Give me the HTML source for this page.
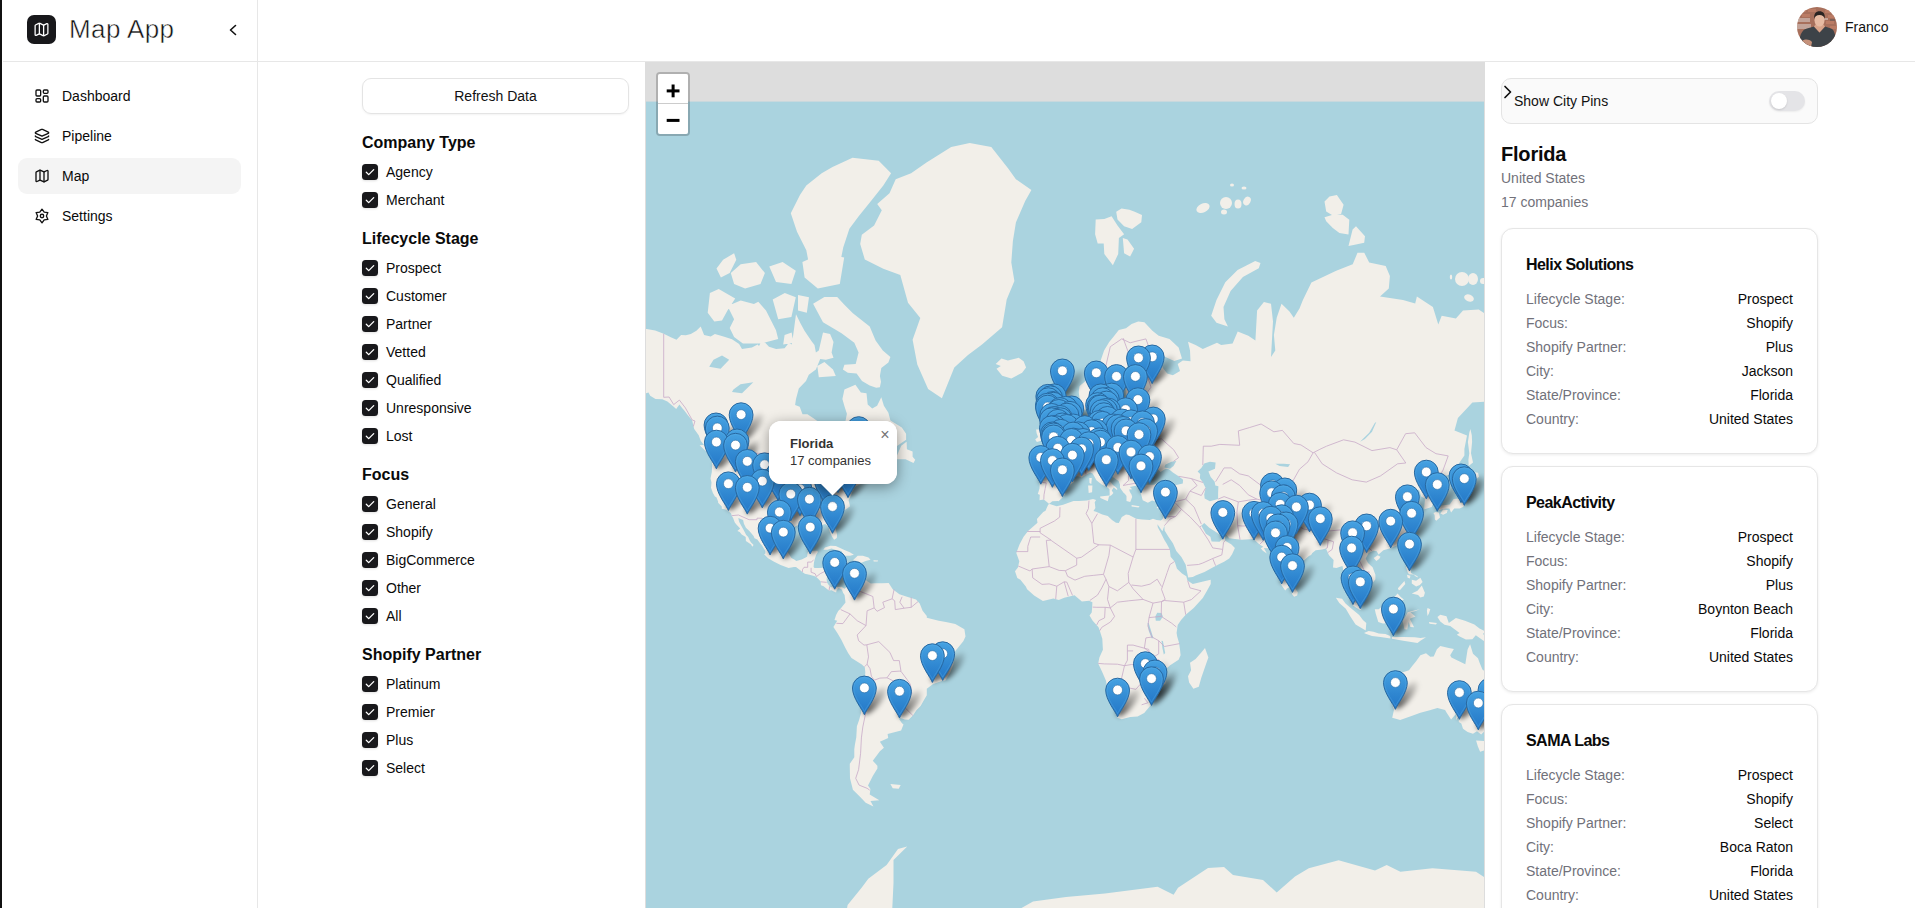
<!DOCTYPE html><html><head><meta charset="utf-8"><style>

*{box-sizing:border-box;margin:0;padding:0}
html,body{width:1915px;height:908px;overflow:hidden;background:#fff;font-family:"Liberation Sans", sans-serif;color:#0a0a0a}
.abs{position:absolute}
.lbar{position:absolute;left:0;top:0;width:2px;height:908px;background:#111}
.side{position:absolute;left:2px;top:0;width:256px;height:908px;border-right:1px solid #e7e7e7}
.hline{position:absolute;left:3px;top:61px;width:1912px;height:1px;background:#e7e7e7}
.nav{position:absolute;left:18px;width:223px;height:36px;border-radius:9px;font-size:14px;line-height:36px}
.nav svg{position:absolute;left:16px;top:10px}
.nav span{position:absolute;left:44px;top:0}
.nav.act{background:#f4f4f4}
.h{position:absolute;left:362px;font-size:16px;font-weight:bold;line-height:20px;white-space:nowrap}
.cb{position:absolute;left:362px;height:20px;font-size:14px;line-height:20px;white-space:nowrap}
.cb svg{position:absolute;left:0;top:2px;filter:drop-shadow(0 1px 1px rgba(0,0,0,.12))}
.cb span{position:absolute;left:24px;top:0}
.card{position:absolute;left:1501px;width:317px;height:226px;border:1px solid #e6e6e6;border-radius:12px;background:#fff;box-shadow:0 1px 3px rgba(0,0,0,.08)}
.card .t{position:absolute;left:24px;top:26px;font-size:16px;font-weight:bold;letter-spacing:-0.55px;line-height:20px;white-space:nowrap}
.row{position:absolute;left:24px;width:267px;font-size:14px;line-height:20px;white-space:nowrap}
.row .k{position:absolute;left:0;color:#71717a}
.row .v{position:absolute;right:0;color:#0a0a0a}

</style></head><body>
<div class="lbar"></div><div class="side"></div><div class="hline"></div>
<div class="abs" style="left:27px;top:15px;width:29px;height:29px;border-radius:7px;background:#18181b"></div>
<div class="abs" style="left:33px;top:21px;width:17px;height:17px"><svg width="17" height="17" viewBox="0 0 24 24" fill="none" stroke="#fff" stroke-width="1.8" stroke-linecap="round" stroke-linejoin="round"><path d="M14.106 5.553a2 2 0 0 0 1.788 0l3.659-1.83A1 1 0 0 1 21 4.619v12.764a1 1 0 0 1-.553.894l-4.553 2.277a2 2 0 0 1-1.788 0l-4.212-2.106a2 2 0 0 0-1.788 0l-3.659 1.83A1 1 0 0 1 3 19.381V6.618a1 1 0 0 1 .553-.894l4.553-2.277a2 2 0 0 1 1.788 0z"/><path d="M15 5.764v15"/><path d="M9 3.236v15"/></svg></div>
<div class="abs" style="left:69px;top:13px;font-size:26px;line-height:32px;white-space:nowrap;color:#111;letter-spacing:0.4px;-webkit-text-stroke:0.5px #fff">Map App</div>
<svg class="abs" style="left:226px;top:22px" width="14" height="16" viewBox="0 0 14 16"><path d="M9.5 3.5L4.5 8l5 4.5" fill="none" stroke="#111" stroke-width="1.6" stroke-linecap="round" stroke-linejoin="round"/></svg>
<div class="nav" style="top:78px"><svg width="16" height="16" viewBox="0 0 24 24" fill="none" stroke="#111" stroke-width="2" stroke-linecap="round" stroke-linejoin="round"><rect x="3" y="3" width="7" height="9" rx="1.5"/><rect x="14" y="3" width="7" height="5" rx="1.5"/><rect x="14" y="12" width="7" height="9" rx="1.5"/><rect x="3" y="16" width="7" height="5" rx="1.5"/></svg><span>Dashboard</span></div>
<div class="nav" style="top:118px"><svg width="16" height="16" viewBox="0 0 24 24" fill="none" stroke="#111" stroke-width="2" stroke-linecap="round" stroke-linejoin="round"><path d="M12.83 2.18a2 2 0 0 0-1.66 0L2.6 6.08a1 1 0 0 0 0 1.83l8.58 3.91a2 2 0 0 0 1.66 0l8.58-3.9a1 1 0 0 0 0-1.83z"/><path d="M2 12a1 1 0 0 0 .58.91l8.6 3.91a2 2 0 0 0 1.65 0l8.58-3.9A1 1 0 0 0 22 12"/><path d="M2 17a1 1 0 0 0 .58.91l8.6 3.91a2 2 0 0 0 1.65 0l8.58-3.9A1 1 0 0 0 22 17"/></svg><span>Pipeline</span></div>
<div class="nav act" style="top:158px"><svg width="16" height="16" viewBox="0 0 24 24" fill="none" stroke="#111" stroke-width="2" stroke-linecap="round" stroke-linejoin="round"><path d="M14.106 5.553a2 2 0 0 0 1.788 0l3.659-1.83A1 1 0 0 1 21 4.619v12.764a1 1 0 0 1-.553.894l-4.553 2.277a2 2 0 0 1-1.788 0l-4.212-2.106a2 2 0 0 0-1.788 0l-3.659 1.83A1 1 0 0 1 3 19.381V6.618a1 1 0 0 1 .553-.894l4.553-2.277a2 2 0 0 1 1.788 0z"/><path d="M15 5.764v15"/><path d="M9 3.236v15"/></svg><span>Map</span></div>
<div class="nav" style="top:198px"><svg width="16" height="16" viewBox="0 0 24 24" fill="none" stroke="#111" stroke-width="2" stroke-linecap="round" stroke-linejoin="round"><path d="M12.00,1.80L15.30,6.28L20.83,6.90L18.60,12.00L20.83,17.10L15.30,17.72L12.00,22.20L8.70,17.72L3.17,17.10L5.40,12.00L3.17,6.90L8.70,6.28Z"/><circle cx="12" cy="12" r="2.6"/></svg><span>Settings</span></div>
<svg class="abs" style="left:1797px;top:7px" width="40" height="40" viewBox="0 0 40 40"><defs><clipPath id="av"><circle cx="20" cy="20" r="20"/></clipPath></defs><g clip-path="url(#av)">
<rect width="40" height="40" fill="#a8705c"/>
<g fill="#c08068" opacity=".8"><rect x="0" y="2" width="9" height="3"/><rect x="11" y="2" width="8" height="3"/><rect x="28" y="3" width="9" height="3"/><rect x="31" y="8" width="9" height="3"/><rect x="29" y="14" width="8" height="3"/><rect x="33" y="19" width="7" height="3"/><rect x="5" y="7" width="8" height="3"/></g>
<g fill="#d9d0cc" opacity=".55"><rect x="1" y="11" width="12" height="4"/><rect x="0" y="17" width="14" height="5"/><rect x="27" y="11" width="4" height="2"/></g>
<rect x="33" y="12" width="5" height="2" fill="#6e5a55" opacity=".7"/>
<path d="M2 40C2 30 4 23 10 21.5L17 19.5L22.5 25.5L28 19.5L34 21.5C38 23 39 30 39 40Z" fill="#3d4348"/>
<path d="M17 19.5L22.5 25.5L28 19.5L26 17H19Z" fill="#d9a48a"/>
<ellipse cx="22.5" cy="13.2" rx="5" ry="6.3" fill="#e7bba3"/>
<path d="M17.2 12C16.8 6.5 19 4.3 22.5 4.3S28.3 6.5 27.8 12C27 9 25.5 8 22.5 8S18 9 17.2 12Z" fill="#2a2422"/>
<path d="M5 34C8 32 12 32 15 35L14 40H4Z" fill="#d49a80" opacity=".9"/>
</g></svg>
<div class="abs" style="left:1845px;top:17px;font-size:14px;line-height:20px;color:#111">Franco</div>
<div class="abs" style="left:362px;top:78px;width:267px;height:36px;border:1px solid #e4e4e4;border-radius:9px;box-shadow:0 1px 2px rgba(0,0,0,.05);text-align:center;font-size:14px;line-height:34px;color:#111">Refresh Data</div>
<div class="h" style="top:133px">Company Type</div>
<div class="cb" style="top:162px"><svg width="16" height="16" viewBox="0 0 16 16"><rect x="0" y="0" width="16" height="16" rx="3.5" fill="#18181b"/><path d="M4.3 8.3l2.4 2.3 5-5" fill="none" stroke="#fff" stroke-width="1.3" stroke-linecap="round" stroke-linejoin="round"/></svg><span>Agency</span></div>
<div class="cb" style="top:190px"><svg width="16" height="16" viewBox="0 0 16 16"><rect x="0" y="0" width="16" height="16" rx="3.5" fill="#18181b"/><path d="M4.3 8.3l2.4 2.3 5-5" fill="none" stroke="#fff" stroke-width="1.3" stroke-linecap="round" stroke-linejoin="round"/></svg><span>Merchant</span></div>
<div class="h" style="top:229px">Lifecycle Stage</div>
<div class="cb" style="top:258px"><svg width="16" height="16" viewBox="0 0 16 16"><rect x="0" y="0" width="16" height="16" rx="3.5" fill="#18181b"/><path d="M4.3 8.3l2.4 2.3 5-5" fill="none" stroke="#fff" stroke-width="1.3" stroke-linecap="round" stroke-linejoin="round"/></svg><span>Prospect</span></div>
<div class="cb" style="top:286px"><svg width="16" height="16" viewBox="0 0 16 16"><rect x="0" y="0" width="16" height="16" rx="3.5" fill="#18181b"/><path d="M4.3 8.3l2.4 2.3 5-5" fill="none" stroke="#fff" stroke-width="1.3" stroke-linecap="round" stroke-linejoin="round"/></svg><span>Customer</span></div>
<div class="cb" style="top:314px"><svg width="16" height="16" viewBox="0 0 16 16"><rect x="0" y="0" width="16" height="16" rx="3.5" fill="#18181b"/><path d="M4.3 8.3l2.4 2.3 5-5" fill="none" stroke="#fff" stroke-width="1.3" stroke-linecap="round" stroke-linejoin="round"/></svg><span>Partner</span></div>
<div class="cb" style="top:342px"><svg width="16" height="16" viewBox="0 0 16 16"><rect x="0" y="0" width="16" height="16" rx="3.5" fill="#18181b"/><path d="M4.3 8.3l2.4 2.3 5-5" fill="none" stroke="#fff" stroke-width="1.3" stroke-linecap="round" stroke-linejoin="round"/></svg><span>Vetted</span></div>
<div class="cb" style="top:370px"><svg width="16" height="16" viewBox="0 0 16 16"><rect x="0" y="0" width="16" height="16" rx="3.5" fill="#18181b"/><path d="M4.3 8.3l2.4 2.3 5-5" fill="none" stroke="#fff" stroke-width="1.3" stroke-linecap="round" stroke-linejoin="round"/></svg><span>Qualified</span></div>
<div class="cb" style="top:398px"><svg width="16" height="16" viewBox="0 0 16 16"><rect x="0" y="0" width="16" height="16" rx="3.5" fill="#18181b"/><path d="M4.3 8.3l2.4 2.3 5-5" fill="none" stroke="#fff" stroke-width="1.3" stroke-linecap="round" stroke-linejoin="round"/></svg><span>Unresponsive</span></div>
<div class="cb" style="top:426px"><svg width="16" height="16" viewBox="0 0 16 16"><rect x="0" y="0" width="16" height="16" rx="3.5" fill="#18181b"/><path d="M4.3 8.3l2.4 2.3 5-5" fill="none" stroke="#fff" stroke-width="1.3" stroke-linecap="round" stroke-linejoin="round"/></svg><span>Lost</span></div>
<div class="h" style="top:465px">Focus</div>
<div class="cb" style="top:494px"><svg width="16" height="16" viewBox="0 0 16 16"><rect x="0" y="0" width="16" height="16" rx="3.5" fill="#18181b"/><path d="M4.3 8.3l2.4 2.3 5-5" fill="none" stroke="#fff" stroke-width="1.3" stroke-linecap="round" stroke-linejoin="round"/></svg><span>General</span></div>
<div class="cb" style="top:522px"><svg width="16" height="16" viewBox="0 0 16 16"><rect x="0" y="0" width="16" height="16" rx="3.5" fill="#18181b"/><path d="M4.3 8.3l2.4 2.3 5-5" fill="none" stroke="#fff" stroke-width="1.3" stroke-linecap="round" stroke-linejoin="round"/></svg><span>Shopify</span></div>
<div class="cb" style="top:550px"><svg width="16" height="16" viewBox="0 0 16 16"><rect x="0" y="0" width="16" height="16" rx="3.5" fill="#18181b"/><path d="M4.3 8.3l2.4 2.3 5-5" fill="none" stroke="#fff" stroke-width="1.3" stroke-linecap="round" stroke-linejoin="round"/></svg><span>BigCommerce</span></div>
<div class="cb" style="top:578px"><svg width="16" height="16" viewBox="0 0 16 16"><rect x="0" y="0" width="16" height="16" rx="3.5" fill="#18181b"/><path d="M4.3 8.3l2.4 2.3 5-5" fill="none" stroke="#fff" stroke-width="1.3" stroke-linecap="round" stroke-linejoin="round"/></svg><span>Other</span></div>
<div class="cb" style="top:606px"><svg width="16" height="16" viewBox="0 0 16 16"><rect x="0" y="0" width="16" height="16" rx="3.5" fill="#18181b"/><path d="M4.3 8.3l2.4 2.3 5-5" fill="none" stroke="#fff" stroke-width="1.3" stroke-linecap="round" stroke-linejoin="round"/></svg><span>All</span></div>
<div class="h" style="top:645px">Shopify Partner</div>
<div class="cb" style="top:674px"><svg width="16" height="16" viewBox="0 0 16 16"><rect x="0" y="0" width="16" height="16" rx="3.5" fill="#18181b"/><path d="M4.3 8.3l2.4 2.3 5-5" fill="none" stroke="#fff" stroke-width="1.3" stroke-linecap="round" stroke-linejoin="round"/></svg><span>Platinum</span></div>
<div class="cb" style="top:702px"><svg width="16" height="16" viewBox="0 0 16 16"><rect x="0" y="0" width="16" height="16" rx="3.5" fill="#18181b"/><path d="M4.3 8.3l2.4 2.3 5-5" fill="none" stroke="#fff" stroke-width="1.3" stroke-linecap="round" stroke-linejoin="round"/></svg><span>Premier</span></div>
<div class="cb" style="top:730px"><svg width="16" height="16" viewBox="0 0 16 16"><rect x="0" y="0" width="16" height="16" rx="3.5" fill="#18181b"/><path d="M4.3 8.3l2.4 2.3 5-5" fill="none" stroke="#fff" stroke-width="1.3" stroke-linecap="round" stroke-linejoin="round"/></svg><span>Plus</span></div>
<div class="cb" style="top:758px"><svg width="16" height="16" viewBox="0 0 16 16"><rect x="0" y="0" width="16" height="16" rx="3.5" fill="#18181b"/><path d="M4.3 8.3l2.4 2.3 5-5" fill="none" stroke="#fff" stroke-width="1.3" stroke-linecap="round" stroke-linejoin="round"/></svg><span>Select</span></div>
<div class="abs" style="left:645px;top:62px;width:840px;height:846px;overflow:hidden;background:#ddd">
<svg width="838" height="846" viewBox="0 0 838 846" style="position:absolute;left:1px;top:0">
<rect x="0" y="39.6" width="838" height="1000" fill="#aad3df"/>
<path d="M-59.4,302.0L-53.9,297.8L-47.1,298.5L-41.4,297.1L-45.4,290.6L-49.1,286.9L-55.7,282.0L-48.5,277.7L-45.1,272.1L-41.4,266.3L-33.5,261.6L-27.2,257.3L-20.1,261.1L-14.1,262.0L-7.9,265.0L0.7,267.1L9.2,268.4L17.7,271.7L24.8,275.3L30.5,277.7L35.1,272.9L39.9,273.3L44.8,272.1L50.4,268.8L54.7,264.6L58.1,272.9L64.7,274.5L68.9,272.1L77.5,274.5L86.0,277.3L93.1,282.0L96.0,286.9L105.9,285.4L111.6,282.4L113.0,283.9L116.4,277.7L123.0,284.7L130.1,286.9L138.6,286.2L142.9,280.8L145.7,282.4L147.2,272.9L150.0,252.2L154.3,261.1L158.5,268.8L165.6,279.3L168.5,283.1L169.9,290.6L172.8,288.4L177.0,270.4L184.1,272.1L187.5,280.0L185.6,290.6L187.5,295.7L179.9,297.8L174.2,297.1L169.9,307.4L162.8,312.7L160.0,319.1L152.8,326.4L150.0,337.0L149.1,343.1L153.7,344.8L156.5,352.3L161.4,352.3L167.1,355.9L175.6,362.0L184.7,363.0L185.0,373.2L189.8,381.1L193.2,379.7L194.7,375.5L193.8,366.9L199.2,360.5L200.9,351.7L198.6,344.8L196.4,337.0L198.4,327.6L209.4,322.8L214.9,330.6L220.5,331.2L221.7,342.6L226.2,346.4L231.1,343.7L235.3,335.3L237.9,343.7L242.4,350.7L244.4,358.5L251.0,362.5L255.8,365.5L260.1,371.7L260.1,377.8L256.1,380.6L248.1,386.0L238.2,385.6L229.9,386.0L224.0,390.4L220.5,395.1L216.3,400.6L224.0,393.9L231.1,390.8L235.9,392.1L232.5,395.6L234.5,399.8L235.3,403.1L241.0,405.1L245.3,405.5L247.3,400.2L248.7,403.9L237.9,409.6L231.1,412.7L231.6,409.6L235.6,406.7L231.1,407.6L228.2,408.8L223.1,410.8L219.1,413.1L218.0,417.2L216.8,418.6L219.7,420.9L215.7,421.6L208.6,425.0L208.3,426.1L205.8,431.1L205.2,432.8L202.6,438.2L204.0,444.3L201.2,446.6L197.2,449.0L191.5,453.1L188.7,455.4L187.3,461.1L189.7,467.1L191.1,472.7L190.8,475.9L188.1,477.8L186.1,474.7L183.6,469.2L182.7,465.0L179.3,461.9L175.9,463.1L170.8,460.9L168.2,461.1L165.4,460.9L165.1,464.7L164.5,465.5L161.4,465.2L157.1,463.4L152.0,463.1L149.1,464.4L144.9,467.3L142.0,469.9L141.8,473.4L142.5,475.1L141.2,479.7L140.6,486.8L142.0,490.5L145.4,495.9L148.6,497.7L150.3,499.1L155.7,497.6L161.1,494.7L161.7,490.5L163.9,489.6L168.5,488.8L171.2,488.7L171.9,490.0L170.1,492.9L168.5,498.0L167.9,501.0L167.6,504.9L168.5,506.1L172.8,506.1L178.4,505.8L182.3,508.4L181.3,512.8L180.6,517.2L181.0,520.4L182.7,523.0L185.0,525.3L191.5,524.9L195.5,524.7L198.6,526.8L197.2,531.1L195.8,527.6L192.7,526.0L190.7,527.9L190.1,530.5L187.8,529.6L185.6,528.2L183.0,528.5L181.0,527.0L177.6,524.2L175.0,523.3L174.7,520.7L175.0,519.8L171.9,516.6L169.6,514.6L167.1,513.7L163.4,512.8L158.8,511.7L156.3,509.9L154.6,508.4L150.0,504.9L148.0,505.0L142.6,505.9L138.6,504.6L134.6,503.1L130.1,500.7L128.1,499.7L122.1,496.2L118.1,492.3L119.4,491.5L119.3,489.0L116.2,483.7L113.3,480.3L111.3,477.5L108.5,476.2L107.6,474.0L103.4,468.9L99.9,465.7L97.9,461.7L97.1,458.1L92.3,456.1L93.1,459.8L95.7,464.4L97.9,468.6L100.2,473.1L102.2,475.0L103.9,478.7L105.1,480.6L107.6,483.1L106.2,484.7L105.1,482.5L101.4,480.0L99.9,479.1L99.7,475.0L95.7,472.4L93.7,469.9L91.4,469.1L94.2,466.6L90.6,462.7L88.8,460.4L87.1,455.9L85.7,453.8L85.1,451.4L83.2,449.7L81.7,448.7L79.5,447.6L75.8,446.8L75.8,444.5L72.1,440.7L72.1,439.6L70.4,435.3L68.9,434.6L66.9,431.0L65.0,425.8L65.5,420.5L64.5,416.6L65.8,410.0L66.2,402.9L65.8,398.9L64.1,393.9L67.8,395.1L70.6,397.3L70.1,393.4L68.4,390.4L66.1,387.3L62.4,384.2L57.6,382.4L54.7,378.8L52.7,373.2L48.2,366.9L47.3,363.5L46.2,358.5L41.9,353.3L37.9,348.0L36.5,346.4L33.4,342.6L30.2,346.9L27.7,344.8L21.4,339.5L16.3,337.3L9.5,337.0L4.2,333.8L2.5,330.6L-1.6,331.8L-6.2,336.4L-13.0,341.5L-12.1,338.9L-11.4,333.8L-7.6,330.0L-9.6,329.4L-15.0,335.8L-17.8,340.9L-19.5,345.3L-24.4,350.2L-28.3,353.3L-32.6,357.4L-38.6,361.0L-43.4,363.5L-50.0,366.4L-44.8,361.0L-37.2,356.9L-32.0,351.7L-29.5,345.9L-32.0,343.1L-36.9,344.2L-41.4,344.8L-42.0,337.5L-49.4,335.3L-52.0,333.5L-51.7,328.8L-50.5,321.6L-49.1,318.4L-42.9,315.9L-39.2,310.1L-51.7,309.4L-54.8,308.1ZM233.9,325.2L230.2,325.8L223.7,323.4L216.0,319.1L210.6,311.4L201.8,310.7L196.9,307.4L198.4,302.7L209.7,302.0L212.6,290.6L208.3,280.8L195.5,271.2L188.4,267.1L177.0,260.2L167.1,241.8L178.4,234.9L191.2,234.9L198.4,242.8L206.9,251.3L223.7,264.6L229.6,278.5L236.8,288.4L244.4,295.0L242.4,300.6L235.3,306.1L233.9,314.0L235.0,319.7ZM138.6,272.9L145.7,270.4L147.2,280.8L137.2,282.4ZM171.3,304.1L178.4,299.9L187.0,307.4L189.8,314.0L172.8,315.3ZM251.0,393.4L255.2,383.8L260.6,379.7L260.9,387.3L266.6,389.5L266.6,394.7L269.2,397.7L267.5,401.0L259.5,397.3L249.8,397.3ZM68.1,394.3L63.8,393.0L53.6,383.3L57.6,382.9L63.5,387.3ZM177.3,487.7L179.0,485.6L184.4,483.7L189.8,484.0L198.4,488.0L203.8,490.2L207.9,492.8L204.0,493.8L197.8,493.8L195.5,489.0L189.8,488.0L185.6,486.5L181.3,487.7ZM206.9,498.3L211.7,493.8L216.8,493.8L222.5,495.6L224.5,497.7L219.7,498.9L215.4,500.7L211.7,499.2ZM195.8,498.6L202.1,499.5L200.1,500.1L196.4,498.9ZM227.4,498.3L232.2,498.6L231.6,499.5L227.7,499.5ZM356.2,313.7L350.5,306.8L354.8,304.1L349.7,302.0L355.4,296.4L361.9,298.5L372.7,295.7L377.6,299.2L380.1,305.4L376.1,310.7L365.3,316.5ZM198.6,526.8L204.0,521.9L206.0,520.1L207.7,519.4L214.9,515.9L216.3,518.1L219.1,518.4L219.7,516.9L220.5,518.8L224.8,521.6L228.5,521.3L236.2,521.3L242.7,521.0L246.7,527.3L253.4,532.2L261.8,534.9L270.0,537.6L273.7,541.6L276.6,548.8L280.8,553.9L280.8,555.7L292.8,558.7L299.9,559.9L309.3,562.1L318.4,567.3L319.5,574.6L317.3,579.2L309.3,588.9L307.9,594.2L307.3,602.8L304.2,610.6L299.3,618.5L295.9,618.9L287.1,622.0L280.8,626.7L280.8,633.3L278.0,637.9L274.6,644.1L270.6,648.1L266.9,653.5L262.6,657.8L258.9,657.6L254.4,656.1L252.7,656.6L255.8,661.1L257.5,662.5L255.1,668.6L241.6,671.9L242.2,675.9L233.9,679.7L237.9,685.8L233.9,689.3L226.8,698.7L231.4,703.8L231.4,706.6L226.8,714.1L222.0,723.5L224.4,727.0L223.7,732.4L233.3,738.2L224.5,739.0L227.4,744.6L219.7,740.7L214.0,734.8L206.9,727.7L204.0,716.3L203.8,705.5L203.8,701.8L208.3,695.2L208.3,687.3L208.9,682.7L210.3,675.2L210.9,664.3L213.1,658.0L215.0,651.3L215.8,640.8L218.6,620.9L219.3,610.3L218.8,605.2L215.8,602.6L205.5,595.9L202.1,590.9L199.4,586.1L195.2,577.6L191.5,571.3L187.4,565.0L191.2,558.7L188.5,557.9L190.1,553.0L192.2,548.9L194.7,546.5L199.5,540.5L198.6,533.1L197.2,531.1ZM244.4,722.1L254.7,723.1L252.7,726.7L246.7,726.3ZM402.9,441.7L400.9,439.9L397.8,437.5L393.5,438.2L393.8,432.8L391.8,432.0L393.5,426.5L393.8,420.1L392.3,415.9L396.0,413.1L402.6,413.5L408.8,414.1L413.7,414.3L415.1,410.0L415.4,405.1L412.3,399.4L406.3,396.0L405.1,393.4L410.3,392.1L414.2,392.6L413.4,388.2L415.4,389.5L419.4,389.1L423.4,386.0L423.4,382.9L427.9,381.1L430.7,377.8L432.2,373.6L433.0,371.7L438.1,370.8L442.4,370.3L444.1,368.4L443.3,361.5L441.8,355.4L443.3,352.8L449.0,349.6L448.7,355.9L449.8,356.9L447.2,363.5L449.8,366.4L452.9,367.4L457.2,366.4L459.5,368.9L464.3,366.9L471.4,364.5L474.6,366.2L479.1,362.5L478.8,358.5L480.2,351.2L483.1,349.6L487.4,353.3L488.2,346.4L485.6,344.8L485.6,341.5L489.1,339.8L498.4,339.8L504.7,337.5L501.3,335.8L494.2,334.7L484.2,337.5L479.7,332.4L479.4,321.6L482.2,315.9L488.5,307.4L491.0,305.4L488.5,300.6L482.8,300.6L479.4,307.4L476.3,315.3L470.9,321.6L468.3,327.0L467.7,332.9L472.0,336.4L470.0,342.0L466.0,349.1L465.4,355.4L463.7,358.0L459.5,360.5L455.5,361.5L454.6,356.9L452.6,350.2L450.7,343.7L449.2,337.5L447.2,342.6L442.1,347.5L437.6,347.5L434.7,343.7L433.6,337.0L432.7,330.0L433.6,324.0L438.1,320.3L443.0,315.9L448.7,309.4L454.4,299.2L458.1,288.4L463.2,280.0L467.7,274.5L472.8,267.9L480.0,266.3L485.6,262.0L492.2,259.4L498.4,260.2L506.4,268.8L512.7,273.7L523.5,276.9L532.6,285.4L536.0,296.4L528.3,298.9L517.8,294.3L511.0,291.4L516.9,306.1L521.2,311.4L526.9,313.3L534.0,309.1L531.7,302.0L536.8,298.5L544.5,299.2L544.0,288.4L542.0,279.7L549.6,283.1L556.8,286.9L571.0,280.8L575.2,283.1L586.6,281.6L591.7,269.6L602.3,273.7L609.4,278.5L611.1,248.5L617.9,239.9L625.0,241.8L627.0,259.4L625.0,295.0L629.3,288.4L627.9,272.9L630.7,255.8L635.5,241.8L643.5,249.4L647.8,255.8L653.5,246.6L656.9,237.9L665.4,220.5L690.2,208.8L706.7,202.3L711.5,190.8L718.3,190.8L723.2,200.6L739.7,204.0L743.9,213.9L742.8,226.5L734.0,234.4L757.0,238.1L769.2,241.4L770.9,234.4L786.9,245.0L792.3,262.6L795.7,253.8L809.9,256.4L817.0,248.5L832.7,247.6L845.5,255.8L859.7,260.2L876.8,272.1L903.2,271.2L930.8,280.8L945.0,299.2L930.8,325.2L888.1,337.0L882.4,358.5L862.5,382.4L862.5,350.7L859.7,337.0L847.7,339.2L826.4,340.4L811.9,355.9L808.5,368.4L821.0,373.6L818.4,386.9L818.4,393.4L805.6,411.9L794.0,415.5L787.7,423.5L787.2,424.3L784.3,432.8L786.9,441.7L785.7,444.9L778.6,447.3L778.1,445.9L778.9,438.2L778.9,436.4L775.2,434.6L773.5,428.7L772.4,427.6L763.5,431.7L766.4,425.4L764.4,423.9L760.1,427.3L754.4,430.2L753.6,432.8L757.0,436.7L767.2,436.7L761.0,441.7L757.9,445.2L761.6,452.1L765.5,458.8L763.0,460.4L765.8,462.4L764.4,467.6L759.3,475.0L754.7,479.7L750.7,483.4L743.6,486.5L737.4,488.3L732.5,492.6L730.8,489.3L727.4,488.7L722.6,491.1L719.7,496.5L722.0,501.0L726.6,505.2L729.4,512.8L729.4,517.2L727.4,520.1L723.4,522.1L722.3,524.2L716.9,527.0L717.5,523.0L713.2,521.3L709.8,516.6L704.7,512.8L703.0,515.8L701.0,522.1L704.1,527.6L705.0,531.1L709.5,533.9L712.9,540.8L715.2,547.3L714.1,547.9L709.5,545.3L706.9,543.3L704.1,536.2L703.5,533.1L698.4,529.1L699.0,523.6L699.3,517.2L696.4,504.0L690.4,506.1L687.0,505.5L687.6,498.0L683.0,493.2L679.9,486.5L676.2,487.4L669.7,488.3L666.3,491.1L665.1,492.9L662.9,494.1L655.7,500.4L652.9,503.7L649.2,506.1L647.2,508.4L647.2,514.0L645.8,519.0L646.1,522.1L644.4,525.0L641.2,526.2L639.2,528.5L635.5,523.3L633.6,517.8L631.6,514.6L628.7,507.0L625.9,496.5L625.3,489.9L625.0,486.5L617.9,485.9L620.8,491.4L616.8,488.7L614.8,486.2L617.3,484.7L613.6,482.5L609.4,478.7L608.0,476.9L596.0,477.8L591.2,477.2L583.2,476.2L578.9,471.1L573.8,472.4L563.3,465.7L558.2,461.1L555.3,463.7L559.9,471.8L564.4,474.7L565.6,479.4L573.5,479.7L576.1,477.2L579.2,473.7L578.9,478.4L585.5,482.5L588.9,485.9L586.1,492.3L583.2,496.5L578.1,499.8L572.4,502.5L566.7,505.5L558.5,509.9L549.6,513.4L546.8,514.9L542.2,515.5L540.8,509.0L539.7,502.8L535.4,495.0L530.3,489.0L526.9,481.2L522.6,475.0L518.6,468.6L518.4,463.7L516.4,469.2L511.4,462.2L510.7,457.9L514.9,458.4L516.6,457.1L517.6,455.1L518.4,452.7L519.8,449.0L520.6,447.3L520.6,443.5L521.5,439.6L519.2,439.2L517.2,438.9L514.1,441.0L506.1,438.5L501.9,440.7L496.7,438.2L495.3,433.1L494.2,429.1L493.3,427.3L492.8,424.3L492.5,424.1L488.2,423.9L483.9,425.0L486.2,427.3L483.1,427.6L483.9,429.9L485.6,432.8L486.2,434.9L484.2,439.9L480.5,438.9L480.5,433.9L478.8,431.7L477.7,431.0L474.0,425.8L474.0,422.4L472.6,419.0L470.3,417.4L465.4,413.9L462.0,411.6L459.8,406.7L458.1,408.4L458.1,405.5L453.8,406.3L454.4,408.4L454.6,411.6L457.2,413.5L459.2,417.8L464.6,420.1L466.9,423.1L469.7,425.0L471.4,426.9L471.0,428.0L467.7,425.4L465.7,428.4L467.4,431.0L465.7,433.1L463.3,434.6L463.7,432.0L463.5,427.3L460.9,425.0L459.2,424.3L455.8,422.4L453.5,420.7L450.4,418.2L448.1,413.9L446.7,411.6L444.1,410.4L440.1,412.7L439.4,413.1L435.6,415.5L434.0,414.7L431.9,414.3L428.8,414.7L427.5,417.4L427.9,420.1L425.1,422.0L422.2,423.1L421.4,424.7L417.9,429.1L419.4,432.0L417.4,433.5L416.0,436.0L412.5,439.2L411.7,438.9L406.3,439.2L403.6,441.4ZM402.3,442.4L403.7,442.1L410.6,444.2L417.1,442.8L427.5,439.1L433.0,438.9L440.8,438.5L447.0,437.1L450.1,438.0L448.7,440.3L449.0,442.4L449.4,446.1L447.5,449.0L450.1,449.7L456.3,452.4L461.8,454.1L466.0,458.1L470.0,460.8L472.8,461.1L475.8,455.1L480.0,452.4L483.1,452.9L486.9,455.1L490.2,456.8L496.2,457.6L503.8,458.1L507.0,456.8L510.7,457.9L511.4,462.2L511.8,465.3L514.9,471.0L518.4,478.1L520.6,481.6L523.8,487.4L524.6,494.7L528.6,499.5L531.0,506.7L536.0,511.4L540.3,514.3L541.4,518.4L546.8,521.9L558.2,519.2L564.7,517.8L564.7,521.9L561.0,528.8L556.8,535.9L547.7,545.9L539.7,552.7L535.1,558.1L531.7,563.0L530.6,571.0L531.2,574.4L533.1,581.1L534.0,587.4L534.6,593.3L532.6,597.7L523.8,603.4L517.9,609.1L519.2,613.6L519.5,621.6L511.5,627.9L507.0,640.6L498.2,651.1L491.6,654.4L484.2,654.9L475.7,657.3L471.4,655.7L471.1,654.2L469.7,651.1L468.0,646.1L465.6,636.6L461.8,630.1L460.0,618.7L456.1,609.7L452.2,601.4L453.4,595.4L456.9,587.7L456.3,576.7L453.8,568.7L452.5,565.3L446.7,558.7L443.5,553.4L445.7,550.5L446.1,545.9L446.4,540.2L443.0,538.8L435.9,539.4L428.5,533.2L418.2,535.8L412.8,538.1L407.4,536.5L396.9,539.1L388.1,533.6L381.1,527.3L379.8,524.5L374.4,517.7L371.3,516.1L369.0,509.3L371.9,505.5L373.3,499.2L370.3,491.1L373.6,482.2L377.6,474.7L382.1,468.9L391.5,460.8L390.9,457.1L397.2,450.0L399.5,448.7ZM559.0,586.0L562.4,595.6L560.5,600.7L555.3,615.8L552.8,624.8L547.4,626.7L543.1,620.4L542.0,614.2L545.1,608.2L544.0,600.7L549.6,597.1L555.3,590.4ZM406.9,381.5L410.3,380.1L407.4,379.7L403.7,379.0L406.9,376.9L407.1,374.1L405.7,371.7L410.0,371.7L410.6,369.8L409.1,366.4L408.8,364.0L404.3,364.5L404.9,360.0L402.6,362.0L402.9,356.4L402.3,353.3L403.4,349.1L404.6,344.8L410.0,344.5L408.8,349.6L413.7,350.7L411.7,355.9L409.7,358.5L412.8,358.5L414.2,360.5L415.4,365.5L419.1,370.3L419.7,373.6L423.8,375.5L421.4,379.9L422.8,381.5L416.0,383.5L408.8,385.6L402.6,386.7ZM400.6,376.9L395.2,378.8L390.9,380.1L389.2,377.4L392.1,375.1L390.6,371.3L390.1,367.4L394.3,367.4L395.2,362.5L398.0,362.0L402.0,363.0L401.7,366.4L401.4,371.7ZM454.1,434.6L463.2,433.5L461.8,439.2L454.4,436.0ZM442.1,423.5L446.4,423.5L446.1,430.2L442.7,431.0ZM443.3,415.9L445.8,415.9L445.3,422.0L443.5,420.9ZM485.6,443.1L493.6,444.2L492.5,445.6L485.6,444.5ZM510.7,445.2L517.2,442.8L515.2,445.4L511.2,446.2ZM646.1,523.6L647.2,523.6L651.8,530.2L651.2,533.6L648.1,534.8L646.1,532.2L645.8,528.2ZM791.1,448.7L795.7,443.5L803.7,442.4L807.6,437.1L812.8,436.4L814.2,434.9L817.0,429.1L817.0,425.0L818.2,421.6L821.3,422.0L822.4,429.1L819.9,433.5L819.6,438.5L819.4,442.8L816.5,445.2L813.6,446.6L808.2,446.6L805.1,450.5L803.4,446.6L800.0,446.6L795.4,447.6ZM817.0,422.0L816.5,417.8L821.3,413.9L821.9,406.3L825.6,410.0L832.1,410.8L833.0,414.7L827.0,419.7L826.3,420.1L819.9,417.8ZM787.4,451.0L789.7,450.0L792.8,450.4L794.0,455.4L790.3,458.8L788.9,457.4L788.6,453.1ZM794.3,451.4L797.1,447.6L801.7,448.0L800.8,451.0L797.1,452.7ZM822.4,397.7L823.3,391.3L821.9,380.1L823.3,370.8L824.4,366.9L825.8,373.2L826.1,380.1L825.0,391.3L827.0,400.6L822.7,403.9ZM763.0,477.2L765.8,478.1L764.4,484.3L762.4,487.7L760.4,484.3L761.0,480.3ZM727.7,495.9L731.7,493.2L734.5,494.7L733.1,497.1L730.3,498.9ZM761.8,498.0L766.4,498.0L766.7,502.5L764.7,505.8L765.0,511.1L771.5,514.3L771.8,515.5L769.5,514.3L767.5,512.5L763.0,512.3L761.8,510.5L760.1,505.5L761.0,504.0ZM765.8,531.6L771.5,528.8L775.8,523.6L778.9,530.8L777.8,534.5L774.4,535.6L772.1,533.1ZM774.4,515.8L776.6,520.1L773.8,523.0L770.1,524.5L765.8,521.6L765.8,517.8L770.1,518.7ZM751.9,526.2L758.4,519.0L759.3,521.9L753.9,528.2L752.2,527.6ZM761.0,512.8L764.4,513.7L763.8,516.6L761.6,515.8ZM749.0,534.5L751.6,531.6L754.7,534.9L757.9,537.4L754.4,539.6L753.0,543.1L757.0,548.8L753.0,550.2L751.0,555.3L749.6,561.6L744.5,563.3L744.8,561.1L736.8,561.6L732.3,559.9L729.7,551.6L728.8,547.3L732.7,547.2L736.0,544.5L743.1,539.1L745.9,537.4ZM689.9,535.8L696.1,536.8L699.5,541.4L704.7,545.9L713.2,553.0L716.9,558.1L720.3,561.0L719.7,568.4L709.6,562.4L704.2,554.3L699.8,546.8L693.3,541.1ZM718.0,571.0L722.6,569.0L727.4,569.8L732.8,571.4L739.4,572.1L744.2,573.9L744.5,576.4L734.5,575.0L726.0,573.9L720.3,572.1ZM745.9,575.0L757.3,575.0L768.7,575.3L774.4,575.9L780.0,575.3L774.4,578.7L771.5,581.1L757.3,578.7L745.9,576.7ZM768.7,549.3L764.4,550.2L769.5,554.4L763.8,556.7L768.1,565.3L764.4,565.0L762.7,560.1L761.3,567.6L758.4,567.3L756.7,559.0L759.6,554.2L761.6,550.2L767.2,548.8L773.8,547.3ZM781.5,545.9L784.3,547.3L782.9,551.6L781.5,553.9L780.9,548.8ZM782.9,560.1L790.9,561.0L790.0,562.4L783.5,561.8ZM791.4,555.0L794.3,552.7L800.5,554.2L802.8,561.0L809.9,555.9L819.0,558.7L828.4,562.4L833.5,566.4L838.4,569.0L839.2,570.7L836.9,571.6L839.8,575.9L845.5,581.1L837.5,578.7L829.8,573.3L826.4,577.3L819.9,577.6L814.2,574.7L810.8,572.7L813.6,571.0L804.2,564.1L798.5,562.7L794.3,559.6ZM824.1,582.2L827.0,591.8L832.0,596.2L833.5,600.4L836.4,607.4L842.6,612.7L847.7,620.1L854.6,632.7L855.7,636.6L854.0,646.1L850.6,650.8L849.0,654.0L846.0,660.8L845.3,666.8L839.8,667.9L835.2,672.6L831.0,669.3L830.1,669.7L827.0,671.7L821.6,669.9L817.0,666.8L815.3,661.5L812.8,660.1L812.8,657.6L811.6,655.2L809.9,658.3L810.8,651.1L805.1,657.6L800.5,650.5L799.1,648.1L791.4,646.1L782.9,648.4L774.4,650.8L765.5,654.0L754.2,658.0L746.2,655.7L748.0,647.8L744.8,637.2L741.6,628.2L743.1,615.2L756.2,610.6L763.0,608.2L766.4,603.7L770.1,599.2L774.4,593.3L780.0,591.2L784.3,594.8L787.7,594.5L790.9,587.3L794.3,584.0L802.8,586.0L807.9,586.9L804.2,593.3L805.4,595.6L819.3,602.2L821.6,587.4ZM830.1,678.5L840.6,679.3L839.8,688.1L834.1,689.7L831.8,684.2ZM387.0,839.6L420.0,835.0L459.0,831.5L511.6,824.7L527.6,832.7L532.0,825.8L562.0,806.0L578.0,805.0L587.0,813.0L617.0,818.0L630.7,830.4L649.0,814.4L662.8,806.3L692.6,798.3L729.0,808.6L740.7,803.0L754.4,809.8L786.5,806.3L830.0,809.8L844.0,819.0L844.0,858.0L354.0,858.0ZM247.5,798.0L247.5,821.0L246.3,846.0L249.0,858.0L199.0,858.0L201.6,843.0L215.4,826.0L222.3,816.7L240.6,803.0L252.0,787.0L261.2,784.6ZM280.5,100.4L305.2,85.0L323.7,81.0L345.3,85.0L362.2,106.5L369.9,117.3L385.4,128.1L379.2,138.9L369.9,160.5L366.9,179.0L365.3,200.6L368.4,219.1L360.7,237.6L356.1,265.3L350.0,270.5L336.0,282.5L322.0,293.0L308.3,305.4L295.9,336.3L282.1,327.0L271.3,302.4L266.6,277.7L274.3,256.1L262.0,240.7L254.3,212.9L237.3,206.8L218.8,197.5L214.2,182.1L215.8,172.8L228.1,163.6L235.8,148.2L231.2,142.0L243.5,131.2L249.7,117.3L265.1,111.2ZM186.5,105.0L206.5,95.8L232.7,98.8L245.1,111.2L237.3,123.5L225.0,138.9L212.7,154.3L203.4,166.7L197.3,185.2L194.2,200.6L175.7,206.8L163.3,203.7L160.3,188.3L151.0,169.8L144.8,151.3L154.1,132.8L160.3,123.5L175.7,111.2ZM565.2,253.8L570.5,237.9L579.3,220.3L591.6,207.9L609.2,199.1L614.5,200.9L612.8,206.2L596.9,215.0L584.6,229.1L577.5,245.0L578.4,257.3L581.9,264.4L570.5,260.8ZM449.7,157.6L458.3,157.0L465.6,154.3L471.5,163.6L478.1,172.2L472.9,176.1L472.2,192.0L466.9,203.2L458.3,192.0L457.7,181.4L451.7,181.4L449.1,172.2ZM470.2,149.7L475.5,146.4L483.4,147.7L488.7,149.7L496.0,153.0L495.3,160.3L486.1,166.9L478.1,164.3L471.5,157.6ZM476.8,176.1L481.5,177.5L488.1,186.7L484.1,194.6L478.1,191.3ZM678.5,139.5L683.5,134.5L690.9,132.9L697.6,142.8L695.1,151.9L686.8,153.5L680.2,149.4ZM678.5,155.2L686.8,152.7L696.7,152.7L703.3,157.7L702.5,172.5L693.4,170.9L686.8,165.9L680.2,159.3ZM702.5,184.1L706.6,167.6L710.0,164.3L719.0,174.2L718.2,180.8L710.0,182.5ZM63.9,230.9L72.7,226.9L89.2,236.4L81.5,248.5L76.0,258.4L68.3,259.5L61.7,250.7ZM81.5,244.1L94.7,238.6L107.9,241.9L112.3,239.7L120.0,248.5L130.0,268.3L132.2,277.1L114.5,281.5L96.9,281.5L88.1,274.9L83.7,266.1L88.1,257.3ZM70.5,206.6L77.1,197.8L88.1,191.2L90.3,197.8L83.7,211.0L74.9,215.4ZM84.8,211.0L94.7,202.2L110.1,200.0L118.9,211.0L114.5,222.1L99.1,226.5L88.1,222.1ZM123.3,204.4L136.6,200.0L149.8,208.8L145.4,222.1L130.0,219.9ZM156.4,200.0L176.2,191.2L198.2,195.6L193.8,222.1L171.8,226.5L158.6,215.4ZM126.7,237.5L138.8,230.9L149.8,235.3L145.4,255.1L132.2,257.3ZM152.0,233.1L163.0,235.3L160.8,250.7L152.0,248.5Z" fill="#f2efe9" fill-rule="nonzero"/>
<path d="M497.0,417.8L498.4,415.9L500.2,410.8L503.0,408.0L504.7,404.7L507.0,401.4L514.1,404.3L511.2,406.3L514.4,410.0L519.8,406.7L522.9,407.2L526.9,410.4L532.6,414.3L537.1,417.8L536.8,421.6L526.9,423.7L518.9,419.7L514.1,419.7L508.4,422.8L501.6,422.8L498.4,422.8ZM519.2,402.7L525.5,399.8L530.3,398.9L527.5,403.9L524.0,406.7L518.4,405.5ZM558.2,401.4L563.9,399.8L569.6,400.6L569.0,406.7L562.4,409.6L564.7,415.1L568.7,419.7L569.3,423.5L572.4,424.3L572.1,431.3L572.1,437.1L563.9,439.2L558.7,436.4L558.2,432.4L559.6,426.1L557.0,420.5L553.9,416.3L554.2,411.9L551.6,409.6L555.3,405.9ZM629.3,401.8L637.8,401.8L644.1,402.3L642.1,405.1L633.6,403.9ZM716.0,377.8L723.2,370.8L728.8,361.0L730.3,360.0L726.0,369.8L718.9,376.9L714.1,379.7ZM87.4,327.6L94.5,322.2L107.3,320.3L96.0,331.2L86.0,330.0ZM67.5,297.8L76.0,293.5L83.2,297.8L74.6,306.8L63.2,304.7ZM140.0,380.1L137.2,373.2L140.6,369.4L144.9,380.1L142.3,384.7ZM509.3,554.4L511.2,550.7L515.5,551.0L516.9,554.4L514.1,558.7L509.8,558.7ZM501.6,561.0L502.7,561.0L506.4,573.0L507.5,576.2L505.6,576.2L502.7,568.7ZM515.5,578.7L516.9,579.0L519.2,590.9L517.8,592.4L516.4,586.0ZM156.8,400.6L162.8,397.3L167.6,394.3L177.0,396.0L178.4,401.8L172.8,402.3L162.8,401.4ZM168.5,410.0L171.3,403.9L177.0,404.7L175.6,410.0L170.8,421.3L169.1,419.7ZM179.9,403.9L192.7,406.7L190.4,410.0L186.4,415.1L184.1,415.9L181.3,411.9L181.9,406.7L177.9,404.7ZM182.7,419.7L188.4,417.4L193.5,416.3L194.1,417.4L187.0,421.6L181.3,420.9ZM194.1,412.3L201.2,411.2L202.1,413.9L191.8,414.7Z" fill="#aad3df"/>
<path d="M68.1,391.3L148.2,391.3L148.2,389.5L149.7,392.6L154.3,393.0L162.8,395.1L164.2,395.6M178.4,401.8L184.1,406.7L184.4,415.9L182.4,419.7L184.1,420.9L194.1,416.6L193.5,414.3L201.8,413.5L206.3,408.0L215.4,408.0L219.7,401.0L222.0,397.9L224.8,398.3L225.9,399.5L225.9,405.1L227.9,407.6M17.7,271.7L17.7,335.3L23.1,335.0L27.7,342.6L33.4,338.1L39.4,345.9L46.2,358.0L49.0,359.0L47.3,364.5M85.7,453.7L92.5,453.0L103.1,457.7L111.0,457.7L111.0,456.2L115.9,456.2L121.6,463.4L125.5,465.4L127.5,462.7L130.4,462.8L135.8,470.2L142.5,475.1M156.5,509.9L156.5,507.6L158.0,505.3L161.7,505.3L161.7,500.1L165.2,500.1L167.6,498.0M165.1,505.8L165.1,510.2L169.1,511.7L170.5,514.6M175.0,519.8L180.7,520.4M181.0,508.4L174.2,511.7L170.5,514.6M183.0,528.5L183.8,524.2M272.0,539.6L265.2,545.3L258.1,546.2L249.3,547.6L248.7,538.8L246.1,536.8L236.8,540.2L238.5,545.6L231.1,549.3L228.2,545.9L221.1,548.8L220.0,563.6L211.2,573.0L212.6,578.7L218.0,583.1L220.8,582.8L232.8,579.6L243.9,590.4L247.6,598.6L253.3,598.6L255.0,609.4L260.9,617.3L264.3,622.3L265.8,631.7L260.4,635.3L255.0,641.8L266.9,653.5M265.2,535.4L265.2,545.3M256.1,534.8L253.8,540.2L258.1,546.2M248.1,527.3L246.1,536.8M222.5,615.8L224.5,623.5L223.7,631.4L219.7,641.1L219.7,651.1L216.8,665.0L215.4,675.9L214.6,691.3L212.6,707.6L209.7,716.3L213.1,723.1L221.1,726.3L223.7,728.1M214.0,518.7L212.6,528.8L219.7,531.6L226.8,534.5L228.2,545.9M194.7,547.6L204.0,551.9L211.2,558.7L220.0,563.6M204.0,551.9L196.9,561.6L190.4,561.3M220.8,582.8L222.5,594.8L221.1,602.2L224.0,606.7L225.4,614.2L228.2,618.2L233.9,616.1L241.0,615.8L245.3,609.7L253.3,609.1L255.0,609.4M221.1,602.2L218.6,604.7M241.0,615.8L253.8,622.0L263.5,627.0M255.0,641.8L252.7,652.8M414.0,445.2L413.7,455.1L408.3,459.1L394.1,466.3L394.1,470.8L405.1,478.1L400.3,478.4L403.2,504.6L386.1,507.0L384.1,509.0L372.2,504.0M394.1,469.5L381.3,469.5M370.4,489.6L381.8,489.6L381.8,484.3L384.7,475.0L394.1,475.0M445.8,461.4L447.8,481.2L452.9,482.8L435.3,495.3L430.7,496.2L405.1,478.4M451.5,451.7L445.8,461.4M443.0,438.5L442.4,446.6L440.1,451.4L445.8,461.4M489.9,456.8L489.9,487.4L524.0,487.4M489.9,487.4L487.1,495.0L464.3,483.1L452.9,482.8M487.1,495.0L482.2,511.4L482.8,520.4L487.1,526.8L497.0,537.4L507.0,541.1L515.5,539.6L519.2,537.4L515.5,527.3L521.2,510.5L524.0,502.5L528.6,499.5M485.6,523.0L495.6,524.2L504.1,522.1L511.2,517.2L515.5,524.5M430.7,496.2L430.7,503.1L419.4,508.7L413.1,508.4L403.2,504.6M419.4,508.7L421.6,514.3L429.0,518.1L438.7,514.3L447.2,513.4L457.5,512.3L462.9,493.5L464.3,483.1M386.1,507.0L386.7,515.8L396.0,522.4L403.2,521.9L410.8,524.2L418.2,519.8L420.8,520.1L426.5,533.4M410.8,524.2L409.7,537.1M418.2,519.8L422.2,534.2M457.5,512.3L460.0,517.2L455.8,525.9L451.5,533.1L443.8,538.5M460.0,517.2L462.9,524.5L471.4,528.8L482.8,520.4M462.9,524.5L461.5,537.4L464.3,545.9L459.2,545.3L450.9,545.3L446.7,545.1M464.3,545.9L471.4,540.2L482.8,538.8L497.0,537.4M459.2,545.3L458.6,555.9L452.9,558.7L450.7,563.0M464.3,545.9L468.6,554.4L464.3,560.1L455.8,565.3L453.8,568.7M507.0,541.1L503.0,555.6L501.9,564.1L506.1,575.0L499.9,575.9L498.4,586.0L503.3,590.1L502.7,587.4L487.1,583.1L481.4,583.1L481.4,588.9L487.1,588.9M515.5,539.6L518.4,538.5L537.7,540.2L539.7,552.7M537.7,540.2L545.4,537.6L555.0,528.8L544.0,525.9L541.7,518.7M515.2,554.4L525.8,561.3L530.3,565.0M503.0,555.6L515.2,554.4L515.5,539.6M506.1,575.0L512.7,578.7L518.4,584.5L533.7,581.6M512.7,578.7L512.7,591.8L505.3,596.5L498.4,602.2L490.8,603.1L485.4,602.5L478.5,603.7L471.4,602.2L458.3,601.9L452.2,601.4M478.5,603.7L481.4,598.3L481.4,588.9M475.7,615.8L475.7,624.5L475.7,635.9L465.6,636.6M475.7,615.8L478.5,603.7M475.7,624.5L489.9,627.3L495.6,620.7L502.4,616.4L507.8,617.0L512.4,606.7L512.7,597.7L505.3,596.5M490.8,603.1L495.6,609.7L502.4,616.4M507.8,617.0L509.8,630.8L512.4,630.8M498.4,636.2L501.9,640.8L495.6,642.8M556.8,403.1L557.3,384.2L565.3,384.2L573.8,382.4L593.7,383.3L592.3,368.9L603.7,365.5L615.1,362.0L627.9,369.8L636.4,368.4L647.8,381.5L654.9,382.9L667.1,390.8M667.1,390.8L673.9,387.3L680.5,384.2L697.6,377.8L708.9,380.1L726.0,388.6L743.9,385.6L750.7,387.8L759.6,371.7L768.7,370.8L780.0,385.6L790.0,391.7L802.2,393.9L797.1,408.0L791.4,417.8L790.3,418.2M668.5,390.4L676.2,401.8L690.4,410.8L706.1,417.8L720.3,420.1L734.5,413.9L751.6,401.8L759.8,401.0L750.7,387.8M667.1,390.8L662.0,399.8L653.5,407.2L646.9,419.0L632.1,425.4L631.6,437.5L622.2,439.9L610.8,437.1L602.3,438.2L592.3,439.9L590.9,450.4L591.7,463.7L594.0,477.5M572.1,437.1L578.1,434.6L592.3,439.9M569.6,419.7L578.1,405.9L585.2,405.9L593.7,411.9L602.3,413.9L615.1,423.5L620.8,416.6L632.1,417.8L646.9,419.0M576.7,422.4L585.2,417.8L593.7,423.5L602.3,432.8L610.8,437.1M631.6,437.5L640.1,443.5L644.9,453.8L642.9,458.8L649.2,462.1L657.7,467.0L669.1,469.2L672.0,468.6L680.5,469.2L694.7,467.9L699.0,476.5L696.1,482.8L706.1,489.0L711.8,485.9L721.7,485.0L726.0,488.7M622.2,439.9L619.3,450.4L615.9,457.1L608.0,463.7L596.6,464.0L591.7,463.7M619.3,450.4L630.7,455.4L629.3,463.7L620.8,470.2L617.9,478.1L613.6,482.5M669.1,469.2L669.4,473.7L674.2,475.3L682.2,478.1L681.3,485.9L679.9,486.5M682.2,478.1L687.6,479.7L686.2,487.4L681.9,490.5M696.1,482.8L703.2,495.0L707.5,501.0L713.2,498.0L718.9,509.9L711.8,514.3L709.8,516.6M706.1,489.0L707.5,501.0M718.9,509.9L723.2,509.9L720.3,518.7L717.5,523.0M703.5,533.1L707.5,535.1L709.5,533.9M699.3,517.2L701.3,523.0L699.0,523.6M544.0,429.1L555.3,433.5L559.6,426.1M544.0,429.1L539.7,437.1L548.2,445.2L551.1,452.1L555.3,462.1M539.7,437.1L528.3,439.9L522.6,440.7L520.9,442.1M528.3,439.9L535.4,447.3L529.7,454.4L521.2,454.8L519.8,451.7M535.4,447.3L544.0,454.8L553.9,465.3L555.3,463.7M529.7,454.4L524.0,457.1L518.4,463.7M553.9,465.3L562.4,478.1L566.7,485.9L576.7,487.4L575.8,492.9L566.7,496.5L556.8,501.0L552.5,502.5L541.1,503.4M566.7,496.5L569.6,503.7M579.2,478.4L577.5,480.6L576.7,487.4M532.6,414.3L545.4,416.6L557.0,420.5M545.4,416.6L551.1,423.5L544.0,429.1M498.4,422.8L493.9,420.5L482.8,422.4L477.1,423.5M487.4,353.3L498.4,357.4L506.4,360.5L509.3,377.4L515.5,376.9L527.7,387.8L532.6,395.6L527.5,399.4M498.4,339.8L498.4,350.7L498.4,357.4M485.6,368.9L494.2,360.0L498.4,357.4M485.6,368.9L486.8,375.5L485.6,380.1L487.4,384.7L483.1,390.8L482.8,394.3L494.2,394.3L498.4,393.4L503.3,406.7M509.3,377.4L486.8,375.5M482.8,394.3L475.7,396.0L467.7,395.6L466.9,403.9L472.3,404.3L480.0,402.3L482.8,410.0L491.3,413.1L500.2,413.1M482.8,410.0L482.5,418.6L477.1,423.5M459.5,368.9L460.3,375.1L461.5,382.0L453.5,385.6L454.6,391.3L458.1,393.0L455.5,397.7L446.1,397.7L440.4,397.3L442.1,391.3L437.0,389.1L435.9,383.3L436.2,378.8L438.7,371.7M461.5,382.0L472.3,389.1L483.1,390.8M455.5,397.7L466.9,395.6M466.9,403.9L457.8,401.8L454.1,399.4L448.7,401.8L438.7,404.3L440.1,412.7M446.1,397.7L438.7,404.3L435.9,402.7L440.4,397.3M437.0,389.1L432.5,386.9L425.9,382.0M413.7,414.3L420.8,416.6L427.9,418.2M393.5,420.1L400.3,420.9L399.2,426.5L398.0,432.8L397.8,437.5M436.2,378.8L428.5,380.6M443.3,364.0L447.0,364.5M453.8,337.0L452.9,328.2L458.6,309.4L464.3,284.7L475.7,276.9L484.2,280.8L489.9,279.3L499.9,276.9L504.1,288.4L499.9,309.4L505.0,325.2L498.4,334.1M477.1,276.1L485.6,299.2L488.5,300.6" fill="none" stroke="#c8aac8" stroke-width="0.8" stroke-linejoin="round"/>
<g fill="#f2efe9"><ellipse cx="557" cy="146" rx="7" ry="4.5" transform="rotate(-25 557 146)"/><ellipse cx="580" cy="141" rx="6" ry="6"/><ellipse cx="592" cy="142" rx="3.5" ry="4.5"/><ellipse cx="601" cy="139" rx="3.5" ry="4.5" transform="rotate(30 601 139)"/><ellipse cx="586" cy="123" rx="2" ry="1.5"/><ellipse cx="598" cy="126" rx="2.5" ry="1.5"/><ellipse cx="578" cy="150" rx="3" ry="2.5"/><ellipse cx="816" cy="217" rx="7" ry="7"/><ellipse cx="827" cy="217" rx="5" ry="6"/><ellipse cx="823" cy="236" rx="5" ry="3.5" transform="rotate(20 823 236)"/><ellipse cx="837" cy="219" rx="3" ry="3"/><ellipse cx="805" cy="215" rx="1.2" ry="2.5"/></g>
<defs><linearGradient id="mg" x1="0" y1="0" x2="0" y2="1"><stop offset="0" stop-color="#46a2e2"/><stop offset="0.6" stop-color="#2f86d0"/><stop offset="1" stop-color="#2377c8"/></linearGradient><linearGradient id="sg" x1="0" y1="0" x2="1" y2="0"><stop offset="0" stop-color="#000" stop-opacity="0.7"/><stop offset="1" stop-color="#000" stop-opacity="0.08"/></linearGradient><filter id="sb" x="-50%" y="-50%" width="200%" height="200%"><feGaussianBlur stdDeviation="2.6"/></filter><g id="mk"><path d="M12.5,40.6C10.6,35.5 0.6,24 0.6,13.9A11.9,11.9 0 0 1 24.4,13.9C24.4,24 14.4,35.5 12.5,40.6Z" fill="url(#mg)" stroke="#2868a0" stroke-width="1"/><path d="M12.5,37.5C10.8,33 1.8,23.5 1.8,13.9A10.7,10.7 0 0 1 23.2,13.9C23.2,23.5 14.2,33 12.5,37.5Z" fill="none" stroke="#5aaee8" stroke-opacity="0.35" stroke-width="1"/><circle cx="12.5" cy="13.8" r="4.9" fill="#fff" stroke="#2a6ba3" stroke-width="0.6"/></g><g id="sh"><ellipse cx="15" cy="0" rx="17" ry="5.5" fill="url(#sg)" filter="url(#sb)"/></g></defs><g><use href="#sh" transform="translate(507.2,319.0) rotate(-50)"/><use href="#sh" transform="translate(493.5,320.0) rotate(-50)"/><use href="#sh" transform="translate(417.4,333.0) rotate(-50)"/><use href="#sh" transform="translate(451.3,335.0) rotate(-50)"/><use href="#sh" transform="translate(471.5,338.6) rotate(-50)"/><use href="#sh" transform="translate(490.4,338.6) rotate(-50)"/><use href="#sh" transform="translate(466.7,357.1) rotate(-50)"/><use href="#sh" transform="translate(409.2,357.9) rotate(-50)"/><use href="#sh" transform="translate(455.9,357.9) rotate(-50)"/><use href="#sh" transform="translate(402.8,358.4) rotate(-50)"/><use href="#sh" transform="translate(405.6,359.9) rotate(-50)"/><use href="#sh" transform="translate(462.4,361.5) rotate(-50)"/><use href="#sh" transform="translate(457.7,361.8) rotate(-50)"/><use href="#sh" transform="translate(492.9,361.8) rotate(-50)"/><use href="#sh" transform="translate(403.4,361.8) rotate(-50)"/><use href="#sh" transform="translate(461.6,365.1) rotate(-50)"/><use href="#sh" transform="translate(407.9,365.5) rotate(-50)"/><use href="#sh" transform="translate(408.3,366.3) rotate(-50)"/><use href="#sh" transform="translate(452.6,366.7) rotate(-50)"/><use href="#sh" transform="translate(402.4,367.3) rotate(-50)"/><use href="#sh" transform="translate(454.1,368.9) rotate(-50)"/><use href="#sh" transform="translate(402.6,369.2) rotate(-50)"/><use href="#sh" transform="translate(455.3,369.2) rotate(-50)"/><use href="#sh" transform="translate(426.7,370.0) rotate(-50)"/><use href="#sh" transform="translate(420.7,370.4) rotate(-50)"/><use href="#sh" transform="translate(415.0,371.6) rotate(-50)"/><use href="#sh" transform="translate(480.6,371.8) rotate(-50)"/><use href="#sh" transform="translate(463.5,372.2) rotate(-50)"/><use href="#sh" transform="translate(460.5,372.6) rotate(-50)"/><use href="#sh" transform="translate(413.8,373.5) rotate(-50)"/><use href="#sh" transform="translate(457.1,373.7) rotate(-50)"/><use href="#sh" transform="translate(425.0,375.4) rotate(-50)"/><use href="#sh" transform="translate(458.9,376.8) rotate(-50)"/><use href="#sh" transform="translate(96.1,376.8) rotate(-50)"/><use href="#sh" transform="translate(421.9,377.2) rotate(-50)"/><use href="#sh" transform="translate(406.7,377.5) rotate(-50)"/><use href="#sh" transform="translate(415.1,379.5) rotate(-50)"/><use href="#sh" transform="translate(462.5,380.5) rotate(-50)"/><use href="#sh" transform="translate(408.9,380.6) rotate(-50)"/><use href="#sh" transform="translate(508.3,381.1) rotate(-50)"/><use href="#sh" transform="translate(415.5,381.8) rotate(-50)"/><use href="#sh" transform="translate(406.6,381.8) rotate(-50)"/><use href="#sh" transform="translate(476.9,383.0) rotate(-50)"/><use href="#sh" transform="translate(412.8,383.4) rotate(-50)"/><use href="#sh" transform="translate(486.0,383.9) rotate(-50)"/><use href="#sh" transform="translate(454.3,384.5) rotate(-50)"/><use href="#sh" transform="translate(497.5,384.9) rotate(-50)"/><use href="#sh" transform="translate(457.5,385.4) rotate(-50)"/><use href="#sh" transform="translate(417.3,387.0) rotate(-50)"/><use href="#sh" transform="translate(71.0,387.0) rotate(-50)"/><use href="#sh" transform="translate(468.3,388.0) rotate(-50)"/><use href="#sh" transform="translate(428.2,388.0) rotate(-50)"/><use href="#sh" transform="translate(421.7,388.5) rotate(-50)"/><use href="#sh" transform="translate(473.1,388.6) rotate(-50)"/><use href="#sh" transform="translate(409.8,389.5) rotate(-50)"/><use href="#sh" transform="translate(439.8,389.7) rotate(-50)"/><use href="#sh" transform="translate(406.4,389.9) rotate(-50)"/><use href="#sh" transform="translate(72.3,390.1) rotate(-50)"/><use href="#sh" transform="translate(478.1,390.5) rotate(-50)"/><use href="#sh" transform="translate(213.7,390.7) rotate(-50)"/><use href="#sh" transform="translate(500.6,392.6) rotate(-50)"/><use href="#sh" transform="translate(481.1,393.0) rotate(-50)"/><use href="#sh" transform="translate(450.9,393.2) rotate(-50)"/><use href="#sh" transform="translate(415.8,393.4) rotate(-50)"/><use href="#sh" transform="translate(446.7,393.8) rotate(-50)"/><use href="#sh" transform="translate(433.4,395.9) rotate(-50)"/><use href="#sh" transform="translate(407.4,396.0) rotate(-50)"/><use href="#sh" transform="translate(428.1,396.1) rotate(-50)"/><use href="#sh" transform="translate(494.0,396.7) rotate(-50)"/><use href="#sh" transform="translate(408.6,397.0) rotate(-50)"/><use href="#sh" transform="translate(408.5,399.0) rotate(-50)"/><use href="#sh" transform="translate(454.2,401.9) rotate(-50)"/><use href="#sh" transform="translate(428.5,402.1) rotate(-50)"/><use href="#sh" transform="translate(438.0,402.5) rotate(-50)"/><use href="#sh" transform="translate(426.5,402.5) rotate(-50)"/><use href="#sh" transform="translate(92.0,403.0) rotate(-50)"/><use href="#sh" transform="translate(71.4,404.2) rotate(-50)"/><use href="#sh" transform="translate(455.4,404.3) rotate(-50)"/><use href="#sh" transform="translate(443.8,405.8) rotate(-50)"/><use href="#sh" transform="translate(207.0,406.0) rotate(-50)"/><use href="#sh" transform="translate(90.5,407.3) rotate(-50)"/><use href="#sh" transform="translate(472.9,409.6) rotate(-50)"/><use href="#sh" transform="translate(412.8,410.4) rotate(-50)"/><use href="#sh" transform="translate(436.6,411.1) rotate(-50)"/><use href="#sh" transform="translate(486.0,414.2) rotate(-50)"/><use href="#sh" transform="translate(200.0,416.0) rotate(-50)"/><use href="#sh" transform="translate(427.4,417.3) rotate(-50)"/><use href="#sh" transform="translate(504.5,418.8) rotate(-50)"/><use href="#sh" transform="translate(395.8,419.6) rotate(-50)"/><use href="#sh" transform="translate(461.3,421.9) rotate(-50)"/><use href="#sh" transform="translate(407.4,422.7) rotate(-50)"/><use href="#sh" transform="translate(102.3,423.5) rotate(-50)"/><use href="#sh" transform="translate(119.6,426.9) rotate(-50)"/><use href="#sh" transform="translate(193.0,428.0) rotate(-50)"/><use href="#sh" transform="translate(496.0,428.1) rotate(-50)"/><use href="#sh" transform="translate(417.4,432.0) rotate(-50)"/><use href="#sh" transform="translate(203.0,433.0) rotate(-50)"/><use href="#sh" transform="translate(781.3,434.2) rotate(-50)"/><use href="#sh" transform="translate(133.0,436.0) rotate(-50)"/><use href="#sh" transform="translate(816.0,438.0) rotate(-50)"/><use href="#sh" transform="translate(819.3,440.8) rotate(-50)"/><use href="#sh" transform="translate(181.0,441.0) rotate(-50)"/><use href="#sh" transform="translate(117.3,443.3) rotate(-50)"/><use href="#sh" transform="translate(83.4,445.9) rotate(-50)"/><use href="#sh" transform="translate(792.3,446.7) rotate(-50)"/><use href="#sh" transform="translate(627.5,447.0) rotate(-50)"/><use href="#sh" transform="translate(102.3,449.5) rotate(-50)"/><use href="#sh" transform="translate(155.0,451.0) rotate(-50)"/><use href="#sh" transform="translate(639.8,452.0) rotate(-50)"/><use href="#sh" transform="translate(520.4,454.3) rotate(-50)"/><use href="#sh" transform="translate(626.7,454.9) rotate(-50)"/><use href="#sh" transform="translate(145.8,456.3) rotate(-50)"/><use href="#sh" transform="translate(638.3,458.8) rotate(-50)"/><use href="#sh" transform="translate(762.4,458.9) rotate(-50)"/><use href="#sh" transform="translate(164.4,461.3) rotate(-50)"/><use href="#sh" transform="translate(635.2,466.5) rotate(-50)"/><use href="#sh" transform="translate(664.5,467.2) rotate(-50)"/><use href="#sh" transform="translate(187.5,468.7) rotate(-50)"/><use href="#sh" transform="translate(651.4,469.2) rotate(-50)"/><use href="#sh" transform="translate(134.4,474.2) rotate(-50)"/><use href="#sh" transform="translate(577.8,474.6) rotate(-50)"/><use href="#sh" transform="translate(609.0,475.4) rotate(-50)"/><use href="#sh" transform="translate(766.6,475.4) rotate(-50)"/><use href="#sh" transform="translate(618.2,475.7) rotate(-50)"/><use href="#sh" transform="translate(636.7,478.8) rotate(-50)"/><use href="#sh" transform="translate(625.9,480.3) rotate(-50)"/><use href="#sh" transform="translate(675.3,480.8) rotate(-50)"/><use href="#sh" transform="translate(745.7,483.3) rotate(-50)"/><use href="#sh" transform="translate(641.0,486.0) rotate(-50)"/><use href="#sh" transform="translate(633.0,488.0) rotate(-50)"/><use href="#sh" transform="translate(721.6,488.0) rotate(-50)"/><use href="#sh" transform="translate(165.2,489.3) rotate(-50)"/><use href="#sh" transform="translate(125.1,490.3) rotate(-50)"/><use href="#sh" transform="translate(138.3,494.3) rotate(-50)"/><use href="#sh" transform="translate(707.6,494.9) rotate(-50)"/><use href="#sh" transform="translate(630.5,495.0) rotate(-50)"/><use href="#sh" transform="translate(764.5,506.3) rotate(-50)"/><use href="#sh" transform="translate(642.1,509.6) rotate(-50)"/><use href="#sh" transform="translate(706.6,510.2) rotate(-50)"/><use href="#sh" transform="translate(636.7,519.3) rotate(-50)"/><use href="#sh" transform="translate(189.7,524.6) rotate(-50)"/><use href="#sh" transform="translate(647.5,527.8) rotate(-50)"/><use href="#sh" transform="translate(209.5,535.5) rotate(-50)"/><use href="#sh" transform="translate(708.0,540.0) rotate(-50)"/><use href="#sh" transform="translate(715.3,544.0) rotate(-50)"/><use href="#sh" transform="translate(748.4,571.2) rotate(-50)"/><use href="#sh" transform="translate(297.7,615.8) rotate(-50)"/><use href="#sh" transform="translate(287.4,617.8) rotate(-50)"/><use href="#sh" transform="translate(500.4,625.8) rotate(-50)"/><use href="#sh" transform="translate(510.0,634.0) rotate(-50)"/><use href="#sh" transform="translate(506.5,640.8) rotate(-50)"/><use href="#sh" transform="translate(750.4,644.7) rotate(-50)"/><use href="#sh" transform="translate(219.4,650.1) rotate(-50)"/><use href="#sh" transform="translate(845.0,652.0) rotate(-50)"/><use href="#sh" transform="translate(472.6,652.2) rotate(-50)"/><use href="#sh" transform="translate(254.5,653.4) rotate(-50)"/><use href="#sh" transform="translate(814.4,654.7) rotate(-50)"/><use href="#sh" transform="translate(833.3,665.2) rotate(-50)"/></g><g><use href="#mk" x="493.7" y="281.0"/><use href="#mk" x="480.0" y="282.0"/><use href="#mk" x="403.9" y="295.0"/><use href="#mk" x="437.8" y="297.0"/><use href="#mk" x="458.0" y="300.6"/><use href="#mk" x="476.9" y="300.6"/><use href="#mk" x="453.2" y="319.1"/><use href="#mk" x="395.7" y="319.9"/><use href="#mk" x="442.4" y="319.9"/><use href="#mk" x="389.3" y="320.4"/><use href="#mk" x="392.1" y="321.9"/><use href="#mk" x="448.9" y="323.5"/><use href="#mk" x="444.2" y="323.8"/><use href="#mk" x="479.4" y="323.8"/><use href="#mk" x="389.9" y="323.8"/><use href="#mk" x="448.1" y="327.1"/><use href="#mk" x="394.4" y="327.5"/><use href="#mk" x="394.8" y="328.3"/><use href="#mk" x="439.1" y="328.7"/><use href="#mk" x="388.9" y="329.3"/><use href="#mk" x="440.6" y="330.9"/><use href="#mk" x="389.1" y="331.2"/><use href="#mk" x="441.8" y="331.2"/><use href="#mk" x="413.2" y="332.0"/><use href="#mk" x="407.2" y="332.4"/><use href="#mk" x="401.5" y="333.6"/><use href="#mk" x="467.1" y="333.8"/><use href="#mk" x="450.0" y="334.2"/><use href="#mk" x="447.0" y="334.6"/><use href="#mk" x="400.3" y="335.5"/><use href="#mk" x="443.6" y="335.7"/><use href="#mk" x="411.5" y="337.4"/><use href="#mk" x="445.4" y="338.8"/><use href="#mk" x="82.6" y="338.8"/><use href="#mk" x="408.4" y="339.2"/><use href="#mk" x="393.2" y="339.5"/><use href="#mk" x="401.6" y="341.5"/><use href="#mk" x="449.0" y="342.5"/><use href="#mk" x="395.4" y="342.6"/><use href="#mk" x="494.8" y="343.1"/><use href="#mk" x="402.0" y="343.8"/><use href="#mk" x="393.1" y="343.8"/><use href="#mk" x="463.4" y="345.0"/><use href="#mk" x="399.3" y="345.4"/><use href="#mk" x="472.5" y="345.9"/><use href="#mk" x="440.8" y="346.5"/><use href="#mk" x="484.0" y="346.9"/><use href="#mk" x="444.0" y="347.4"/><use href="#mk" x="403.8" y="349.0"/><use href="#mk" x="57.5" y="349.0"/><use href="#mk" x="454.8" y="350.0"/><use href="#mk" x="414.7" y="350.0"/><use href="#mk" x="408.2" y="350.5"/><use href="#mk" x="459.6" y="350.6"/><use href="#mk" x="396.3" y="351.5"/><use href="#mk" x="426.3" y="351.7"/><use href="#mk" x="392.9" y="351.9"/><use href="#mk" x="58.8" y="352.1"/><use href="#mk" x="464.6" y="352.5"/><use href="#mk" x="200.2" y="352.7"/><use href="#mk" x="487.1" y="354.6"/><use href="#mk" x="467.6" y="355.0"/><use href="#mk" x="437.4" y="355.2"/><use href="#mk" x="402.3" y="355.4"/><use href="#mk" x="433.2" y="355.8"/><use href="#mk" x="419.9" y="357.9"/><use href="#mk" x="393.9" y="358.0"/><use href="#mk" x="414.6" y="358.1"/><use href="#mk" x="480.5" y="358.7"/><use href="#mk" x="395.1" y="359.0"/><use href="#mk" x="395.0" y="361.0"/><use href="#mk" x="440.7" y="363.9"/><use href="#mk" x="415.0" y="364.1"/><use href="#mk" x="424.5" y="364.5"/><use href="#mk" x="413.0" y="364.5"/><use href="#mk" x="78.5" y="365.0"/><use href="#mk" x="57.9" y="366.2"/><use href="#mk" x="441.9" y="366.3"/><use href="#mk" x="430.3" y="367.8"/><use href="#mk" x="193.5" y="368.0"/><use href="#mk" x="77.0" y="369.3"/><use href="#mk" x="459.4" y="371.6"/><use href="#mk" x="399.3" y="372.4"/><use href="#mk" x="423.1" y="373.1"/><use href="#mk" x="472.5" y="376.2"/><use href="#mk" x="186.5" y="378.0"/><use href="#mk" x="413.9" y="379.3"/><use href="#mk" x="491.0" y="380.8"/><use href="#mk" x="382.3" y="381.6"/><use href="#mk" x="447.8" y="383.9"/><use href="#mk" x="393.9" y="384.7"/><use href="#mk" x="88.8" y="385.5"/><use href="#mk" x="106.1" y="388.9"/><use href="#mk" x="179.5" y="390.0"/><use href="#mk" x="482.5" y="390.1"/><use href="#mk" x="403.9" y="394.0"/><use href="#mk" x="189.5" y="395.0"/><use href="#mk" x="767.8" y="396.2"/><use href="#mk" x="119.5" y="398.0"/><use href="#mk" x="802.5" y="400.0"/><use href="#mk" x="805.8" y="402.8"/><use href="#mk" x="167.5" y="403.0"/><use href="#mk" x="103.8" y="405.3"/><use href="#mk" x="69.9" y="407.9"/><use href="#mk" x="778.8" y="408.7"/><use href="#mk" x="614.0" y="409.0"/><use href="#mk" x="88.8" y="411.5"/><use href="#mk" x="141.5" y="413.0"/><use href="#mk" x="626.3" y="414.0"/><use href="#mk" x="506.9" y="416.3"/><use href="#mk" x="613.2" y="416.9"/><use href="#mk" x="132.3" y="418.3"/><use href="#mk" x="624.8" y="420.8"/><use href="#mk" x="748.9" y="420.9"/><use href="#mk" x="150.9" y="423.3"/><use href="#mk" x="621.7" y="428.5"/><use href="#mk" x="651.0" y="429.2"/><use href="#mk" x="174.0" y="430.7"/><use href="#mk" x="637.9" y="431.2"/><use href="#mk" x="120.9" y="436.2"/><use href="#mk" x="564.3" y="436.6"/><use href="#mk" x="595.5" y="437.4"/><use href="#mk" x="753.1" y="437.4"/><use href="#mk" x="604.7" y="437.7"/><use href="#mk" x="623.2" y="440.8"/><use href="#mk" x="612.4" y="442.3"/><use href="#mk" x="661.8" y="442.8"/><use href="#mk" x="732.2" y="445.3"/><use href="#mk" x="627.5" y="448.0"/><use href="#mk" x="619.5" y="450.0"/><use href="#mk" x="708.1" y="450.0"/><use href="#mk" x="151.7" y="451.3"/><use href="#mk" x="111.6" y="452.3"/><use href="#mk" x="124.8" y="456.3"/><use href="#mk" x="694.1" y="456.9"/><use href="#mk" x="617.0" y="457.0"/><use href="#mk" x="751.0" y="468.3"/><use href="#mk" x="628.6" y="471.6"/><use href="#mk" x="693.1" y="472.2"/><use href="#mk" x="623.2" y="481.3"/><use href="#mk" x="176.2" y="486.6"/><use href="#mk" x="634.0" y="489.8"/><use href="#mk" x="196.0" y="497.5"/><use href="#mk" x="694.5" y="502.0"/><use href="#mk" x="701.8" y="506.0"/><use href="#mk" x="734.9" y="533.2"/><use href="#mk" x="284.2" y="577.8"/><use href="#mk" x="273.9" y="579.8"/><use href="#mk" x="486.9" y="587.8"/><use href="#mk" x="496.5" y="596.0"/><use href="#mk" x="493.0" y="602.8"/><use href="#mk" x="736.9" y="606.7"/><use href="#mk" x="205.9" y="612.1"/><use href="#mk" x="831.5" y="614.0"/><use href="#mk" x="459.1" y="614.2"/><use href="#mk" x="241.0" y="615.4"/><use href="#mk" x="800.9" y="616.7"/><use href="#mk" x="819.8" y="627.2"/></g>
</svg>
<div style="position:absolute;left:10.5px;top:9.5px;width:34px;height:64px;border:2px solid rgba(0,0,0,.2);border-radius:4px;background-clip:padding-box;overflow:hidden">
 <div style="position:absolute;left:0;top:0;width:30px;height:30px;background:#fff;border-bottom:1px solid #ccc"><svg width="30" height="30" style="position:absolute;left:0;top:0"><rect x="8.7" y="15.4" width="12.8" height="3" fill="#000"/><rect x="13.6" y="10.5" width="3" height="12.8" fill="#000"/></svg></div>
 <div style="position:absolute;left:0;top:30px;width:30px;height:30px;background:#fff"><svg width="30" height="30" style="position:absolute;left:0;top:0"><rect x="8.7" y="14.9" width="12.8" height="3" fill="#000"/></svg></div>
</div>

<div style="position:absolute;left:124px;top:359px;width:128px;height:63px;background:#fff;border-radius:12px;box-shadow:0 3px 14px rgba(0,0,0,0.4)"></div>
<div style="position:absolute;left:167.5px;top:422px;width:40px;height:20px;overflow:hidden"><div style="position:absolute;left:11.5px;top:-9px;width:17px;height:17px;background:#fff;transform:rotate(45deg);box-shadow:0 3px 14px rgba(0,0,0,0.4)"></div></div>
<div style="position:absolute;left:124px;top:359px;width:128px;height:63px;background:#fff;border-radius:12px"></div>
<div style="position:absolute;left:145px;top:373px;font:bold 13px/17px 'Liberation Sans',sans-serif;color:#333;white-space:nowrap">Florida</div>
<div style="position:absolute;left:145px;top:390px;font:13px/17px 'Liberation Sans',sans-serif;color:#333;white-space:nowrap">17 companies</div>
<div style="position:absolute;left:228px;top:361px;width:24px;height:24px;font:16px/24px 'Liberation Sans',sans-serif;color:#757575;text-align:center">&#215;</div>
</div>
<div class="abs" style="left:1501px;top:78px;width:317px;height:46px;border:1px solid #e4e4e4;border-radius:10px;background:#fafafa"></div>
<svg class="abs" style="left:1500px;top:83px" width="16" height="18" viewBox="0 0 16 18"><path d="M5 3.5l5.5 5.5L5 14.5" fill="none" stroke="#111" stroke-width="1.7" stroke-linecap="round" stroke-linejoin="round"/></svg>
<div class="abs" style="left:1514px;top:91px;font-size:14px;line-height:20px;color:#111;white-space:nowrap">Show City Pins</div>
<div class="abs" style="left:1769px;top:91px;width:36px;height:20px;border-radius:10px;background:#e4e4e7;box-shadow:0 1px 2px rgba(0,0,0,.06)"></div>
<div class="abs" style="left:1771px;top:93px;width:16px;height:16px;border-radius:8px;background:#fff;box-shadow:0 1px 2px rgba(0,0,0,.12)"></div>
<div class="abs" style="left:1501px;top:141px;font-size:20px;font-weight:bold;line-height:26px;color:#0a0a0a;letter-spacing:-0.2px">Florida</div>
<div class="abs" style="left:1501px;top:168px;font-size:14px;line-height:20px;color:#71717a">United States</div>
<div class="abs" style="left:1501px;top:192px;font-size:14px;line-height:20px;color:#71717a">17 companies</div>
<div class="card" style="top:228px"><div class="t">Helix Solutions</div><div class="row" style="top:60px"><span class="k">Lifecycle Stage:</span><span class="v">Prospect</span></div><div class="row" style="top:84px"><span class="k">Focus:</span><span class="v">Shopify</span></div><div class="row" style="top:108px"><span class="k">Shopify Partner:</span><span class="v">Plus</span></div><div class="row" style="top:132px"><span class="k">City:</span><span class="v">Jackson</span></div><div class="row" style="top:156px"><span class="k">State/Province:</span><span class="v">Florida</span></div><div class="row" style="top:180px"><span class="k">Country:</span><span class="v">United States</span></div></div>
<div class="card" style="top:466px"><div class="t">PeakActivity</div><div class="row" style="top:60px"><span class="k">Lifecycle Stage:</span><span class="v">Prospect</span></div><div class="row" style="top:84px"><span class="k">Focus:</span><span class="v">Shopify</span></div><div class="row" style="top:108px"><span class="k">Shopify Partner:</span><span class="v">Plus</span></div><div class="row" style="top:132px"><span class="k">City:</span><span class="v">Boynton Beach</span></div><div class="row" style="top:156px"><span class="k">State/Province:</span><span class="v">Florida</span></div><div class="row" style="top:180px"><span class="k">Country:</span><span class="v">United States</span></div></div>
<div class="card" style="top:704px"><div class="t">SAMA Labs</div><div class="row" style="top:60px"><span class="k">Lifecycle Stage:</span><span class="v">Prospect</span></div><div class="row" style="top:84px"><span class="k">Focus:</span><span class="v">Shopify</span></div><div class="row" style="top:108px"><span class="k">Shopify Partner:</span><span class="v">Select</span></div><div class="row" style="top:132px"><span class="k">City:</span><span class="v">Boca Raton</span></div><div class="row" style="top:156px"><span class="k">State/Province:</span><span class="v">Florida</span></div><div class="row" style="top:180px"><span class="k">Country:</span><span class="v">United States</span></div></div>
</body></html>
